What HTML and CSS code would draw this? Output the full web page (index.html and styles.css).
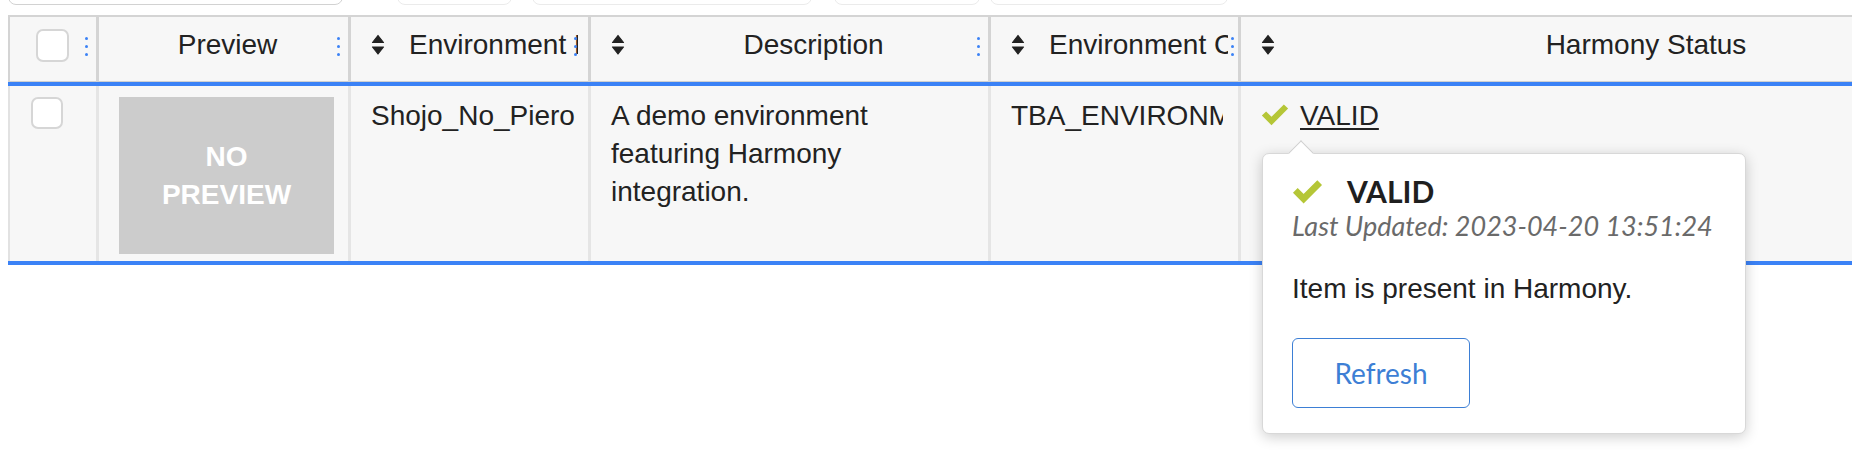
FILE: index.html
```html
<!DOCTYPE html>
<html lang="en">
<head>
<meta charset="utf-8">
<title>Environments</title>
<link rel="stylesheet" href="styles.css">
</head>
<body>
<div class="page">
  <div class="toolbar">
    <div class="tb search"></div>
    <div class="tb tb1"></div>
    <div class="tb tb2"></div>
    <div class="tb tb3"></div>
    <div class="tb tb4"></div>
  </div>

  <div class="grid-wrap">
    <div class="grid">
      <!-- header -->
      <div class="hcell hcell-first">
        <span class="checkbox hcheck"></span>
        <span class="dots"><i></i><i></i><i></i></span>
      </div>
      <div class="hcell hcell-preview">
        <span class="htext">Preview</span>
        <span class="dots"><i></i><i></i><i></i></span>
      </div>
      <div class="hcell">
        <svg class="sort" viewBox="0 0 14 22"><path d="M7 1.5 L12.5 8.5 H1.5 Z M1.5 13 H12.5 L7 20 Z"/></svg>
        <span class="htext">Environment Name</span>
        <span class="dots dots-tight"><i></i><i></i><i></i></span>
      </div>
      <div class="hcell">
        <svg class="sort" viewBox="0 0 14 22"><path d="M7 1.5 L12.5 8.5 H1.5 Z M1.5 13 H12.5 L7 20 Z"/></svg>
        <span class="htext">Description</span>
        <span class="dots"><i></i><i></i><i></i></span>
      </div>
      <div class="hcell">
        <svg class="sort" viewBox="0 0 14 22"><path d="M7 1.5 L12.5 8.5 H1.5 Z M1.5 13 H12.5 L7 20 Z"/></svg>
        <span class="htext">Environment Code</span>
        <span class="dots dots-edge"><i></i><i></i><i></i></span>
      </div>
      <div class="hcell">
        <svg class="sort" viewBox="0 0 14 22"><path d="M7 1.5 L12.5 8.5 H1.5 Z M1.5 13 H12.5 L7 20 Z"/></svg>
        <span class="htext">Harmony Status</span>
        <span class="dots"><i></i><i></i><i></i></span>
      </div>

      <div class="hline"></div>

      <!-- row -->
      <div class="cell cell-first"><span class="checkbox rcheck"></span></div>
      <div class="cell">
        <div class="nopreview">NO<br>PREVIEW</div>
      </div>
      <div class="cell">Shojo_No_Piero</div>
      <div class="cell">A demo environment featuring Harmony integration.</div>
      <div class="cell"><div class="clip">TBA_ENVIRONMENT_CODE</div></div>
      <div class="cell">
        <svg class="check check-sm" viewBox="0 0 28 22"><polyline points="3,10 10.5,17.5 25,3"/></svg><a class="status-link" href="#">VALID</a>
      </div>

      <div class="hline"></div>
    </div>

    <div class="popover">
      <span class="arrow"></span>
      <div class="pop-title">
        <svg class="check check-lg" viewBox="0 0 28 22"><polyline points="3,10 10.5,17.5 25,3"/></svg>
        <span class="pop-valid">VALID</span>
      </div>
      <div class="pop-date">Last Updated: 2023-04-20 13:51:24</div>
      <p class="pop-msg">Item is present in Harmony.</p>
      <button class="pop-btn" type="button">Refresh</button>
    </div>
  </div>
</div>
</body>
</html>
```

FILE: styles.css
```css
* { box-sizing: border-box; }

html {
  overflow: hidden;
}
body {
  margin: 0;
  padding: 0;
  background: #ffffff;
  min-height: 466px;
  font-family: "Liberation Sans", Arial, sans-serif;
  color: #222222;
}

.page {
  padding: 0 8px;
  width: 2200px;
}

/* partially visible toolbar above the table */
.toolbar {
  display: flex;
  align-items: flex-end;
  height: 5px;
  margin-bottom: 10px;
  overflow: hidden;
}
.tb {
  flex: none;
  height: 44px;
  border: 1px solid #ebebeb;
  border-radius: 8px;
  background: #ffffff;
}
.search { width: 335px; border-color: #d2d2d2; height: 42px; }
.tb1 { width: 115px; margin-left: 54px; }
.tb2 { width: 280px; margin-left: 20px; }
.tb3 { width: 146px; margin-left: 22px; }
.tb4 { width: 238px; margin-left: 10px; }

/* table */
.grid-wrap {
  position: relative;
}
.grid {
  display: grid;
  grid-template-columns: 88px 252px 240px 400px 250px 765px;
  border-top: 2px solid #d4d4d4;
  width: max-content;
}

.hcell {
  position: relative;
  display: flex;
  align-items: center;
  height: 65px;
  padding: 0 10px 9px 20px;
  background: #f7f7f7;
  border-left: 3px solid #d4d4d4;
  border-bottom: 1px solid #d0d0d0;
  font-size: 28px;
  min-width: 0;
}
.hcell-first {
  border-left-width: 2px;
  padding-left: 26px;
}
.hcell-preview {
  padding-right: 12px;
}
.htext {
  flex: 1;
  min-width: 0;
  text-align: center;
  white-space: nowrap;
  overflow: hidden;
}
.sort {
  flex: none;
  width: 14px;
  height: 22px;
  margin-right: 24px;
  fill: #222222;
  stroke: #222222;
  stroke-width: 1.2;
  stroke-linejoin: round;
}
.dots {
  position: absolute;
  right: 8px;
  top: 20px;
  display: flex;
  flex-direction: column;
  gap: 5px;
}
.dots i {
  display: block;
  width: 3px;
  height: 3px;
  border-radius: 50%;
  background: #3b82f6;
}
.dots-tight { right: 11px; }
.dots-edge { right: 4px; }

.checkbox {
  display: block;
  flex: none;
  width: 33px;
  height: 33px;
  background: #ffffff;
  border: 2px solid #d6d6d6;
  border-radius: 7px;
}
.hcheck { margin-top: 1px; }
.rcheck { width: 32px; height: 32px; }

.hline {
  grid-column: 1 / -1;
  height: 4px;
  background: #3b82f6;
}

.cell {
  background: #f7f7f7;
  border-left: 3px solid #e5e5e5;
  padding: 11px 15px 7px 20px;
  font-size: 28px;
  line-height: 38px;
  min-width: 0;
}
.cell-first {
  border-left: 2px solid #e2e2e2;
  padding-left: 21px;
}
.clip {
  white-space: nowrap;
  overflow: hidden;
}

.nopreview {
  width: 215px;
  height: 157px;
  background: #cccccc;
  color: #ffffff;
  font-weight: bold;
  font-size: 28px;
  line-height: 38px;
  display: flex;
  align-items: center;
  justify-content: center;
  text-align: center;
}

.check {
  fill: none;
  stroke: #b5c637;
  stroke-width: 6;
  stroke-linecap: butt;
  stroke-linejoin: miter;
}
.check-sm {
  width: 28px;
  height: 23px;
  margin-right: 11px;
  vertical-align: -1px;
}
.status-link {
  color: #222222;
  text-decoration: underline;
  text-decoration-thickness: 2px;
  text-underline-offset: 3px;
}

/* popover */
.popover {
  position: absolute;
  left: 1254px;
  top: 138px;
  width: 484px;
  padding: 19px 28px 25px 29px;
  background: #ffffff;
  border: 1px solid #d8d8d8;
  border-radius: 7px;
  box-shadow: 0 3px 14px rgba(0, 0, 0, 0.2);
  z-index: 5;
}
.arrow {
  position: absolute;
  left: 29px;
  top: -10px;
  width: 18px;
  height: 18px;
  background: #ffffff;
  border-left: 1px solid #d0d0d0;
  border-top: 1px solid #d0d0d0;
  transform: rotate(45deg);
}
.pop-title {
  display: flex;
  align-items: center;
  height: 36px;
}
.check-lg {
  width: 31px;
  height: 25px;
  margin-left: 0;
  margin-right: 24px;
}
.pop-valid {
  font-family: Lato, "Liberation Sans", sans-serif;
  font-weight: bold;
  font-size: 30px;
  line-height: 36px;
  color: #1f1f1f;
}
.pop-date {
  font-family: Lato, "Liberation Sans", sans-serif;
  font-style: italic;
  font-size: 27px;
  line-height: 34px;
  color: #6a6a6a;
}
.pop-msg {
  margin: 27px 0 0;
  font-size: 28px;
  line-height: 38px;
  color: #222222;
}
.pop-btn {
  display: block;
  margin-top: 30px;
  width: 178px;
  height: 70px;
  background: #ffffff;
  border: 1px solid #3d7fd5;
  border-radius: 6px;
  font-family: Lato, "Liberation Sans", sans-serif;
  font-size: 28px;
  color: #3d7fd5;
  padding: 0;
}
```
